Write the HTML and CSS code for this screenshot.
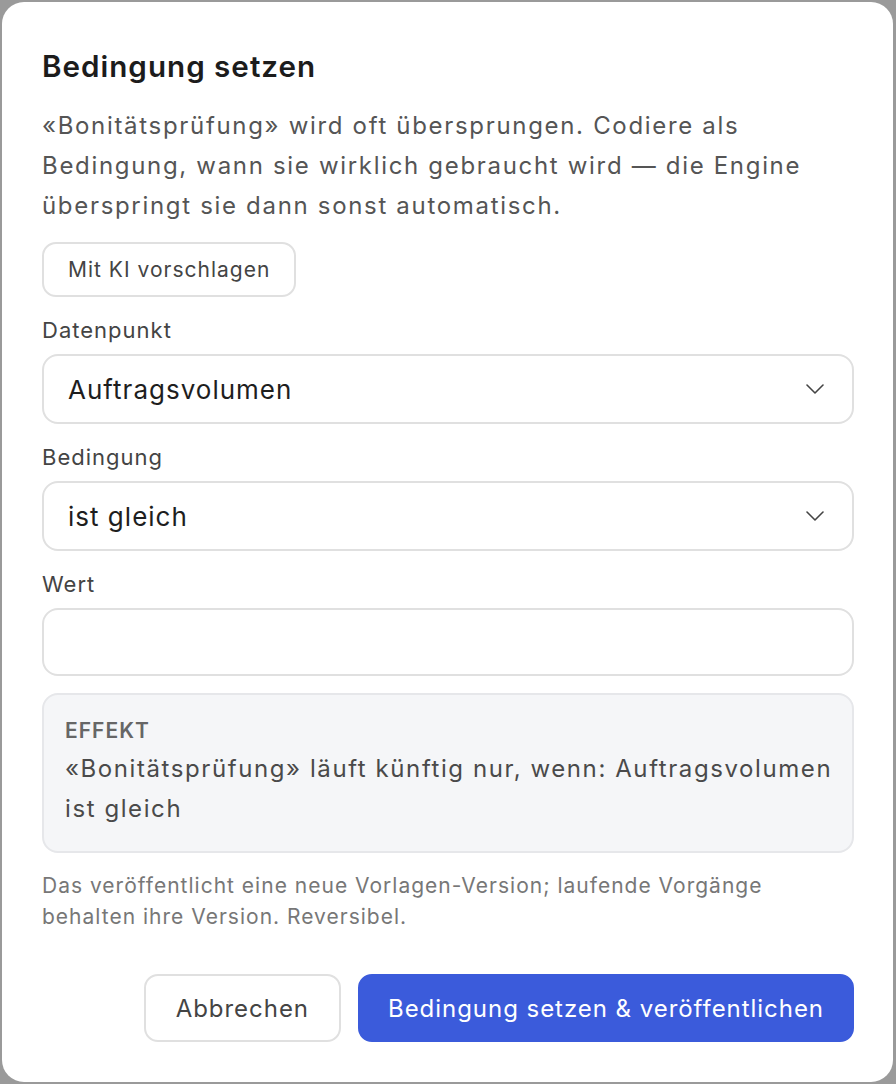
FILE: index.html
```html
<!DOCTYPE html>
<html lang="de">

<head>
    <meta charset="UTF-8">
    <meta name="viewport" content="width=device-width, initial-scale=1.0">
    <title>Bedingung setzen</title>
    <link rel="stylesheet" href="styles.css">
</head>

<body>
    <div class="dialog">
        <h2 class="title">Bedingung setzen</h2>
        <p class="lead">«Bonitätsprüfung» wird oft übersprungen. Codiere als Bedingung, wann sie wirklich gebraucht wird — die Engine überspringt sie dann sonst automatisch.</p>

        <button class="btn btn_small">Mit KI vorschlagen</button>

        <label class="label">Datenpunkt</label>
        <div class="select">
            <span>Auftragsvolumen</span>
            <svg width="18" height="10" viewBox="0 0 18 10"><path d="M1 1l8 8 8-8" fill="none" stroke="#444" stroke-width="1.6" stroke-linecap="round" stroke-linejoin="round"/></svg>
        </div>

        <label class="label">Bedingung</label>
        <div class="select">
            <span>ist gleich</span>
            <svg width="18" height="10" viewBox="0 0 18 10"><path d="M1 1l8 8 8-8" fill="none" stroke="#444" stroke-width="1.6" stroke-linecap="round" stroke-linejoin="round"/></svg>
        </div>

        <label class="label">Wert</label>
        <input class="input" type="text">

        <div class="effect">
            <div class="effect_head">EFFEKT</div>
            <div class="effect_text">«Bonitätsprüfung» läuft künftig nur, wenn: Auftragsvolumen ist gleich</div>
        </div>

        <p class="note">Das veröffentlicht eine neue Vorlagen-Version; laufende Vorgänge behalten ihre Version. Reversibel.</p>

        <div class="actions">
            <button class="btn btn_cancel">Abbrechen</button>
            <button class="btn btn_primary">Bedingung setzen &amp; veröffentlichen</button>
        </div>
    </div>
</body>

</html>
```

FILE: styles.css
```css
* {
    margin: 0;
    padding: 0;
    box-sizing: border-box;
}

html,
body {
    height: 100%;
}

body {
    background-color: #9a9a9a;
    font-family: Inter, "Noto Sans", sans-serif;
    letter-spacing: 0.063em;
    color: #222;
    padding: 2px 3px 2px 2px;
}

.dialog {
    display: flex;
    flex-direction: column;
    align-items: flex-start;
    height: 100%;
    padding: 47px 39px 0 40px;
    background-color: #fff;
    border-radius: 22px;
}

.title {
    font-size: 29.6px;
    line-height: 34px;
    font-weight: 600;
    color: #1c1c1c;
}

.lead {
    margin-top: 23px;
    font-size: 24px;
    line-height: 40px;
    letter-spacing: 0.07em;
    color: #555;
}

.btn {
    font-family: inherit;
    letter-spacing: inherit;
    background-color: #fff;
    border: 2px solid #e0e0e0;
    border-radius: 14px;
    color: #444;
    cursor: pointer;
}

.btn_small {
    margin-top: 16px;
    height: 55px;
    padding: 0 24px;
    font-size: 21px;
}

.label {
    display: block;
    margin-top: 19px;
    font-size: 22px;
    line-height: 28px;
    color: #444;
}

.select,
.input {
    width: 100%;
    margin-top: 10px;
    border: 2px solid #e0e0e0;
    border-radius: 16px;
}

.select {
    display: flex;
    align-items: center;
    justify-content: space-between;
    height: 70px;
    padding: 0 28px 0 24px;
    font-size: 26px;
    color: #1e1e1e;
}

.input {
    height: 68px;
    font-size: 24px;
}

.effect {
    width: 100%;
    margin-top: 17px;
    padding: 22px 10px 22px 21px;
    background-color: #f5f6f8;
    border: 2px solid #e6e7ea;
    border-radius: 16px;
}

.effect_head {
    font-size: 21px;
    line-height: 28px;
    font-weight: 600;
    color: #666;
}

.effect_text {
    margin-top: 4px;
    font-size: 24px;
    line-height: 40px;
    letter-spacing: 0.066em;
    color: #4a4a4a;
}

.note {
    margin-top: 17px;
    font-size: 21px;
    line-height: 31px;
    color: #777;
}

.actions {
    display: flex;
    justify-content: flex-end;
    gap: 17px;
    width: 100%;
    margin-top: 42px;
}

.btn_cancel,
.btn_primary {
    height: 68px;
    font-size: 24px;
    letter-spacing: 0.04em;
}

.btn_cancel {
    padding: 0 30px;
}

.btn_primary {
    padding: 0 28px;
    background-color: #3b5bdb;
    border-color: #3b5bdb;
    color: #fff;
}
```
